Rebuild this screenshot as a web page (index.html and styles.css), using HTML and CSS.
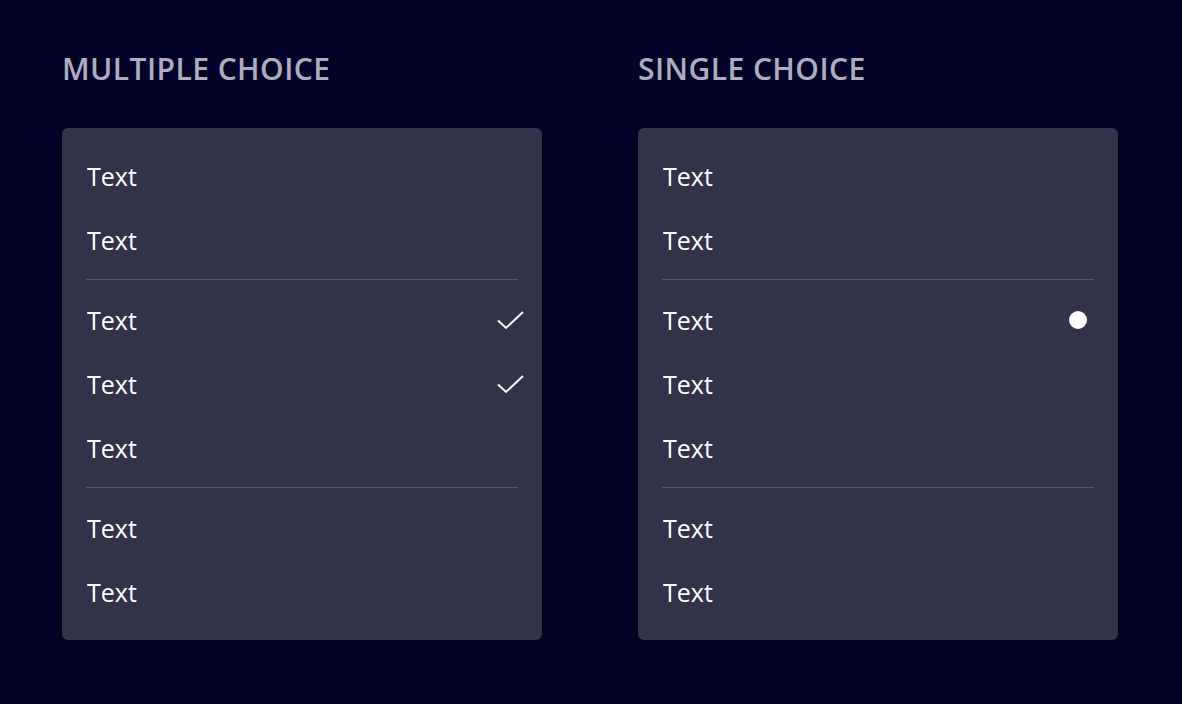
FILE: index.html
```html
<!DOCTYPE html>
<html>
<head>
<meta charset="utf-8">
<link rel="stylesheet" href="styles.css">
</head>
<body>
<div class="page">
  <section class="group">
    <h2 class="title">MULTIPLE CHOICE</h2>
    <div class="card">
      <div class="item"><span>Text</span></div>
      <div class="item"><span>Text</span></div>
      <div class="divider"></div>
      <div class="item"><span>Text</span><svg class="check" width="30" height="22" viewBox="0 0 30 22"><path d="M2 11.5 L10 19 L27 3" fill="none" stroke="#fff" stroke-width="2"/></svg></div>
      <div class="item"><span>Text</span><svg class="check" width="30" height="22" viewBox="0 0 30 22"><path d="M2 11.5 L10 19 L27 3" fill="none" stroke="#fff" stroke-width="2"/></svg></div>
      <div class="item"><span>Text</span></div>
      <div class="divider"></div>
      <div class="item"><span>Text</span></div>
      <div class="item"><span>Text</span></div>
    </div>
  </section>
  <section class="group">
    <h2 class="title">SINGLE CHOICE</h2>
    <div class="card">
      <div class="item"><span>Text</span></div>
      <div class="item"><span>Text</span></div>
      <div class="divider"></div>
      <div class="item"><span>Text</span><span class="dot"></span></div>
      <div class="item"><span>Text</span></div>
      <div class="item"><span>Text</span></div>
      <div class="divider"></div>
      <div class="item"><span>Text</span></div>
      <div class="item"><span>Text</span></div>
    </div>
  </section>
</div>
</body>
</html>
```
FILE: styles.css
```css
html, body {
  margin: 0;
  padding: 0;
  background: #03032a;
}
body {
  font-family: "Open Sans", "Noto Sans", sans-serif;
  width: 1182px;
  height: 704px;
  overflow: hidden;
}
.page {
  display: flex;
  gap: 96px;
  padding: 49px 0 0 62px;
}
.group {
  width: 480px;
}
.title {
  margin: 0;
  font-size: 30px;
  line-height: 40px;
  font-weight: 600;
  color: #adadbf;
  letter-spacing: 0.45px;
}
.card {
  margin-top: 39px;
  background: #32324a;
  border-radius: 6px;
  padding: 16px 24px;
  box-shadow: 0 2px 10px rgba(0, 0, 0, 0.35);
}
.item {
  height: 64px;
  display: flex;
  align-items: center;
  justify-content: space-between;
  font-size: 25px;
  color: #ffffff;
  padding-left: 1px;
}
.check {
  margin-right: -8px;
}
.dot {
  width: 18px;
  height: 18px;
  border-radius: 50%;
  background: #fff;
  margin-right: 7px;
}
.divider {
  height: 1px;
  background: #57576c;
  margin: 7px 0 8px;
}
```
